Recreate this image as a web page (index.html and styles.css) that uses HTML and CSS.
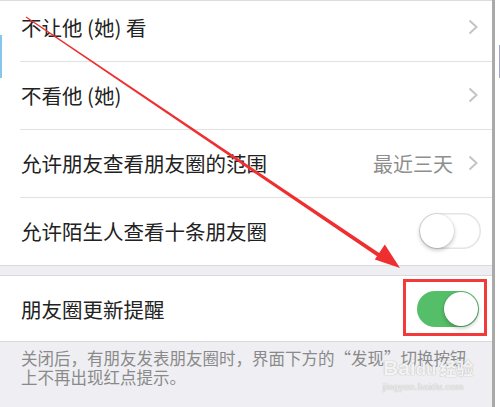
FILE: index.html
```html
<!DOCTYPE html>
<html lang="zh-CN">
<head>
  <meta charset="UTF-8" />
  <meta name="viewport" content="width=device-width, initial-scale=1.0"/>
  <title>朋友圈权限</title>
  <link rel="stylesheet" href="styles.css">
</head>
<body>

  <div class="screen">
    <div class="panel">
      <div class="group first">
        <div class="row">
          <span class="label">不让他 (她) 看</span>
          <svg class="chevron" viewBox="0 0 10 16"><polyline points="1.5,1.5 8.5,8 1.5,14.5"/></svg>
        </div>
        <div class="row">
          <span class="label">不看他 (她)</span>
          <svg class="chevron" viewBox="0 0 10 16"><polyline points="1.5,1.5 8.5,8 1.5,14.5"/></svg>
        </div>
        <div class="row">
          <span class="label">允许朋友查看朋友圈的范围</span>
          <span class="value">最近三天</span>
          <svg class="chevron" viewBox="0 0 10 16"><polyline points="1.5,1.5 8.5,8 1.5,14.5"/></svg>
        </div>
        <div class="row">
          <span class="label">允许陌生人查看十条朋友圈</span>
          <span class="switch"><span class="knob"></span></span>
        </div>
      </div>

      <div class="group">
        <div class="row short">
          <span class="label">朋友圈更新提醒</span>
          <span class="switch on"><span class="knob"></span></span>
          <!-- 标注框 -->
          <span class="mark-box"></span>
        </div>
      </div>

      <p class="note">关闭后，有朋友发表朋友圈时，界面下方的“发现”切换按钮上不再出现红点提示。</p>
    </div>
    <div class="scrollbar"></div>
    <div class="side"><span class="side-mark"></span></div>
  </div>

  <span class="left-mark"></span>

  <!-- 红色箭头标注 -->
  <svg class="arrow" viewBox="0 0 500 407">
    <polygon points="25.7,17.4 26.3,16.6 380.3,253.8 378.1,257.0" />
    <polygon points="400,268 374.8,259.6 384.8,244.6" />
  </svg>

  <div class="watermark">
    <span class="wm-logo">Bai<span class="wm-du">du</span><span class="wm-cn">经验</span></span>
    <span class="wm-url">jingyan.baidu.com</span>
  </div>

</body>
</html>
```

FILE: styles.css
```css
body {
  margin: 0;
  padding: 0;
  width: 500px;
  height: 407px;
  overflow: hidden;
  position: relative;
  background-color: #fff;
  font-family: "Noto Sans CJK SC", "Noto Sans", sans-serif;
}

.screen {
  display: flex;
  height: 407px;
}

.panel {
  width: 492px;
  flex: none;
  background-color: #efeff3;
  border-top: 1px solid #dcdcdc;
  box-sizing: border-box;
  overflow: hidden;
}

.group {
  background-color: white;
  border-top: 1px solid #d9d9d9;
  border-bottom: 1px solid #d9d9d9;
}

.group.first {
  margin-top: -8px;
  margin-bottom: 9px;
  border-top: none;
}

.row {
  position: relative;
  display: flex;
  align-items: center;
  height: 68px;
  padding: 0 11px 0 21px;
}

.row + .row::after {
  content: "";
  position: absolute;
  left: 20px;
  right: 0;
  top: 0;
  height: 1px;
  background-color: #e2e2e2;
}

.row.short {
  height: 65px;
}

.label {
  flex: 1;
  font-size: 20.5px;
  color: #222;
  white-space: nowrap;
}

.value {
  font-size: 20px;
  color: #8e8e8e;
  margin-right: 15px;
}

.chevron {
  width: 10px;
  height: 16px;
  margin-right: 3px;
  fill: none;
  stroke: #c4c4c8;
  stroke-width: 2;
}

.switch {
  display: flex;
  align-items: center;
  width: 62px;
  height: 36px;
  border-radius: 18px;
  background-color: white;
  box-shadow: inset 0 0 0 1.5px #e4e4e4;
  padding: 1px;
  box-sizing: border-box;
}

.switch .knob {
  width: 34px;
  height: 34px;
  border-radius: 50%;
  background-color: white;
  box-shadow: 0 2px 4px rgba(0,0,0,0.25), 0 0 0 0.5px rgba(0,0,0,0.08);
}

.switch.on {
  background-color: #55be69;
  box-shadow: none;
  justify-content: flex-end;
  margin-right: 2px;
}

.mark-box {
  position: absolute;
  right: 5px;
  top: 3px;
  width: 84px;
  height: 57px;
  border: 3px solid #f23a3a;
  box-sizing: border-box;
}

.note {
  margin: 0;
  padding: 7px 20px 0 21px;
  font-size: 16.5px;
  line-height: 19px;
  color: #8a8a8a;
}

.scrollbar {
  width: 3px;
  flex: none;
  background-color: #a9a9a9;
}

.side {
  flex: 1;
  position: relative;
}

.side-mark {
  position: absolute;
  right: 0;
  top: 45px;
  width: 1px;
  height: 33px;
  background-color: #9ea3d6;
}

.left-mark {
  position: absolute;
  left: 0;
  top: 35px;
  width: 2px;
  height: 43px;
  background-color: #86c5ee;
}

.arrow {
  position: absolute;
  left: 0;
  top: 0;
  width: 500px;
  height: 407px;
  fill: #ef2f2f;
  pointer-events: none;
}

.watermark {
  position: absolute;
  left: 383px;
  top: 356px;
  display: flex;
  flex-direction: column;
  color: rgba(255,255,255,0.85);
  text-shadow: 0 0 1px #b8b8b8, 0 0 1px #b8b8b8;
  pointer-events: none;
}

.wm-logo {
  font-family: "Liberation Sans", sans-serif;
  font-size: 21px;
  font-weight: bold;
  line-height: 24px;
}

.wm-du {
  font-size: 17px;
}

.wm-cn {
  font-family: "Noto Sans CJK SC", sans-serif;
  font-size: 17px;
  margin-left: 3px;
}

.wm-url {
  font-family: "Liberation Sans", sans-serif;
  font-size: 9px;
  line-height: 11px;
  letter-spacing: 0.5px;
}
```
